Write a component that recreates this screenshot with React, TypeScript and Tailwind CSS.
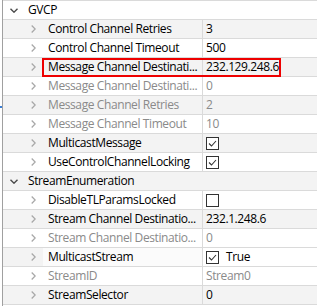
import React from "react";

type Row =
  | { kind: "cat"; name: string }
  | { kind: "prop"; name: string; value?: string; check?: boolean; checkLabel?: string; disabled?: boolean; focus?: boolean };

const rows: Row[] = [
  { kind: "cat", name: "GVCP" },
  { kind: "prop", name: "Control Channel Retries", value: "3" },
  { kind: "prop", name: "Control Channel Timeout", value: "500" },
  { kind: "prop", name: "Message Channel Destinati...", value: "232.129.248.6" },
  { kind: "prop", name: "Message Channel Destinati...", value: "0", disabled: true },
  { kind: "prop", name: "Message Channel Retries", value: "2", disabled: true },
  { kind: "prop", name: "Message Channel Timeout", value: "10", disabled: true },
  { kind: "prop", name: "MulticastMessage", check: true },
  { kind: "prop", name: "UseControlChannelLocking", check: true },
  { kind: "cat", name: "StreamEnumeration" },
  { kind: "prop", name: "DisableTLParamsLocked", check: false },
  { kind: "prop", name: "Stream Channel Destinatio...", value: "232.1.248.6" },
  { kind: "prop", name: "Stream Channel Destinatio...", value: "0", disabled: true },
  { kind: "prop", name: "MulticastStream", check: true, checkLabel: "True", focus: true },
  { kind: "prop", name: "StreamID", value: "Stream0", disabled: true },
  { kind: "prop", name: "StreamSelector", value: "0" },
];

function ChevronRight() {
  return (
    <svg width="5" height="8" viewBox="0 0 5 8" className="shrink-0">
      <polyline points="0.7,0.5 4.2,4 0.7,7.5" fill="none" stroke="#a8a8a8" strokeWidth="1.3" />
    </svg>
  );
}

function ChevronDown() {
  return (
    <svg width="8" height="5" viewBox="0 0 8 5" className="shrink-0">
      <polyline points="0.5,0.7 4,4.2 7.5,0.7" fill="none" stroke="#4a4a4a" strokeWidth="1.4" />
    </svg>
  );
}

function CheckBox({ checked }: { checked: boolean }) {
  return (
    <div className="w-[13px] h-[13px] border border-[#333333] bg-white shrink-0 flex items-center justify-center">
      {checked && (
        <svg width="11" height="11" viewBox="0 0 11 11">
          <polyline points="2,5.5 4.5,8 9,3" fill="none" stroke="#333333" strokeWidth="1.1" />
        </svg>
      )}
    </div>
  );
}

export default function App() {
  return (
    <div
      className="relative w-[317px] h-[306px] bg-white overflow-hidden text-[12px] leading-none tracking-[-0.4px]"
      style={{ fontFamily: '"Open Sans", "Noto Sans", sans-serif' }}
    >
      <div className="ml-[2px] border-l border-[#a0a0a0] h-full">
        <div className="border-t border-[#dadada]">
          {rows.map((r, i) => {
            const bg = i % 2 === 1 ? "bg-[#f3f3f3]" : "bg-white";
            if (r.kind === "cat") {
              return (
                <div key={i} className={`flex items-center h-[19px] border-b border-[#dadada] ${bg}`}>
                  <div className="w-[25px] pl-[7px] flex items-center">
                    <ChevronDown />
                  </div>
                  <span className="text-black">{r.name}</span>
                </div>
              );
            }
            const color = r.disabled ? "text-[#8a8a8a]" : "text-black";
            return (
              <div key={i} className={`flex h-[19px] border-b border-[#dadada] ${bg}`}>
                <div className="w-[40px] pl-[28px] flex items-center">
                  <ChevronRight />
                </div>
                <div
                  className={`w-[160px] pl-[5px] flex items-center whitespace-nowrap overflow-hidden border-r border-[#dadada] ${color} ${r.focus ? "bg-[#fbfbfb]" : ""}`}
                >
                  {r.name}
                </div>
                <div className={`flex-1 pl-[3px] flex items-center gap-[7px] whitespace-nowrap ${color} ${r.focus ? "bg-white" : ""}`}>
                  {r.check !== undefined ? (
                    <>
                      <CheckBox checked={r.check} />
                      {r.checkLabel && <span className="text-black">{r.checkLabel}</span>}
                    </>
                  ) : (
                    r.value
                  )}
                </div>
              </div>
            );
          })}
        </div>
      </div>
      {/* red highlight around the message channel row */}
      <div className="absolute left-[42px] top-[58px] w-[239px] h-[19px] border-2 border-[#ee0000]" />
      <div className="absolute left-0 top-[106px] w-[2px] h-[2px] bg-[#3b7fd6]" />
    </div>
  );
}
